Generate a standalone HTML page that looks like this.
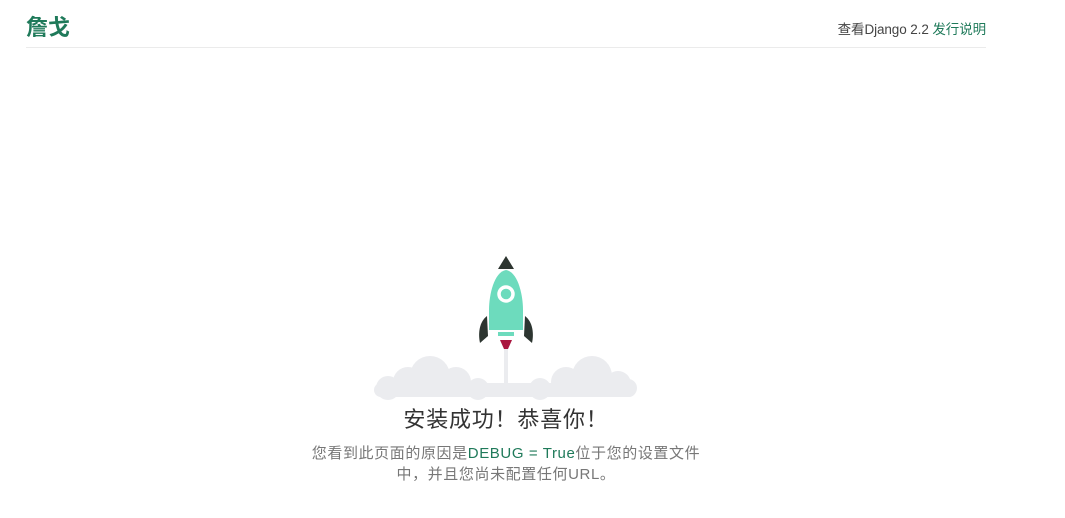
<!DOCTYPE html>
<html><head><meta charset="utf-8"><style>
body{margin:0;background:#fff;font-family:"Liberation Sans","Noto Sans CJK SC",sans-serif;width:1065px;height:518px;overflow:hidden;position:relative}
.logo{position:absolute;left:26px;top:10px;font-size:22px;font-weight:bold;color:#1f7a5a}
.rel{position:absolute;right:79px;top:18px;font-size:13.5px;color:#444;letter-spacing:-0.1px}
.rel span{color:#1f7a5a}
.line{position:absolute;left:26px;top:47px;width:960px;height:1px;background:#ebebeb}
h2{position:absolute;left:256px;width:500px;text-align:center;top:402px;margin:0;font-size:22px;font-weight:normal;color:#333;letter-spacing:0.8px}
p{position:absolute;left:256px;width:500px;text-align:center;top:443px;margin:0;font-size:15px;line-height:21px;color:#777;letter-spacing:0.6px;white-space:nowrap}
p span{color:#1f7a5a}
</style></head><body>
<div class="logo">詹戈</div>
<div class="rel">查看Django 2.2 <span>发行说明</span></div>
<div class="line"></div>
<svg style="position:absolute;left:370px;top:250px" width="272" height="150" viewBox="0 0 272 150">
<g fill="#ebecef">
<circle cx="60" cy="126" r="20"/><circle cx="38" cy="132" r="15"/><circle cx="86" cy="132" r="15"/><circle cx="108" cy="139" r="11"/><circle cx="18" cy="138" r="12"/>
<circle cx="222" cy="126" r="20"/><circle cx="196" cy="132" r="15"/><circle cx="248" cy="134" r="13"/><circle cx="170" cy="139" r="11"/><circle cx="258" cy="138" r="9"/>
<rect x="4" y="133" width="262" height="14" rx="7"/>
<rect x="134" y="95" width="4" height="45"/>
</g>
<path d="M128 19 L136 6 L144 19 Z" fill="#2d3530"/>
<path d="M136 20 C124 22 119 45 119 60 L119 80 L153 80 L153 60 C153 45 148 22 136 20 Z" fill="#6ddbbd"/>
<circle cx="136" cy="44" r="7" fill="#6ddbbd" stroke="#fff" stroke-width="3.5"/>
<path d="M117 66 C109 72 108 84 110 93 L118 86 Z" fill="#2d3530"/>
<path d="M155 66 C163 72 164 84 162 93 L154 86 Z" fill="#2d3530"/>
<rect x="128" y="82" width="16" height="4" fill="#6ddbbd"/>
<path d="M130 90 L142 90 L138 99 L134 99 Z" fill="#a9163f"/>
</svg>
<h2>安装成功！恭喜你！</h2>
<p>您看到此页面的原因是<span>DEBUG = True</span>位于您的设置文件<br>中，并且您尚未配置任何URL。</p>
</body></html>
